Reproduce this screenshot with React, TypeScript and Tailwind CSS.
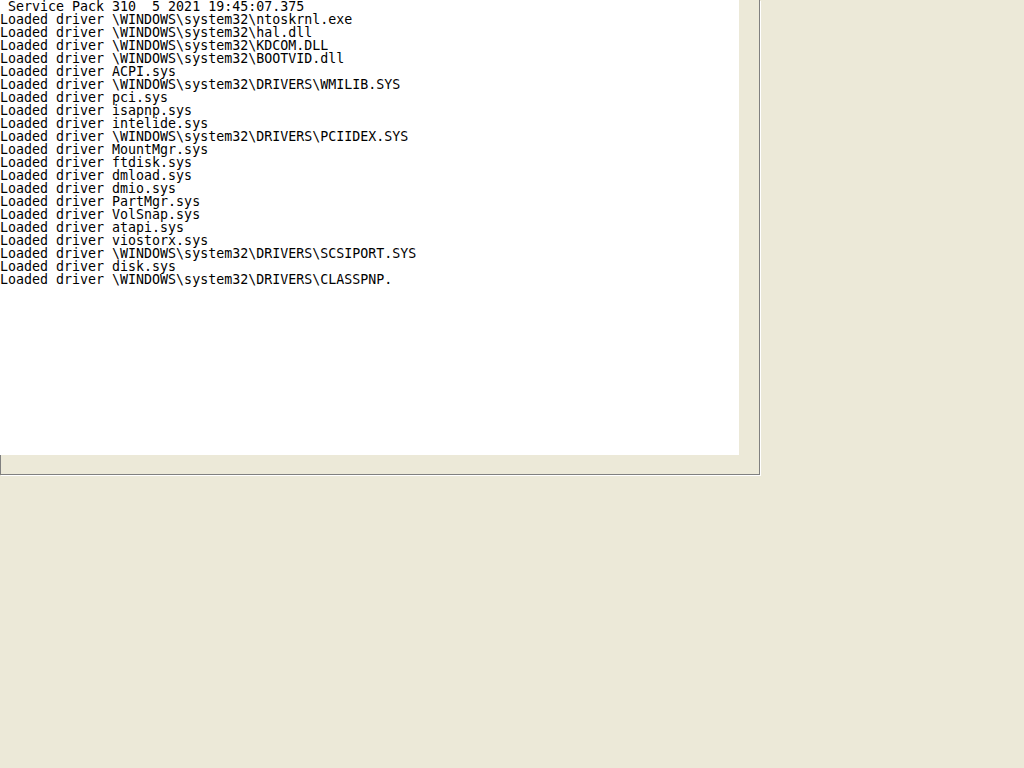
const lines = [
  ' Service Pack 310  5 2021 19:45:07.375',
  'Loaded driver \\WINDOWS\\system32\\ntoskrnl.exe',
  'Loaded driver \\WINDOWS\\system32\\hal.dll',
  'Loaded driver \\WINDOWS\\system32\\KDCOM.DLL',
  'Loaded driver \\WINDOWS\\system32\\BOOTVID.dll',
  'Loaded driver ACPI.sys',
  'Loaded driver \\WINDOWS\\system32\\DRIVERS\\WMILIB.SYS',
  'Loaded driver pci.sys',
  'Loaded driver isapnp.sys',
  'Loaded driver intelide.sys',
  'Loaded driver \\WINDOWS\\system32\\DRIVERS\\PCIIDEX.SYS',
  'Loaded driver MountMgr.sys',
  'Loaded driver ftdisk.sys',
  'Loaded driver dmload.sys',
  'Loaded driver dmio.sys',
  'Loaded driver PartMgr.sys',
  'Loaded driver VolSnap.sys',
  'Loaded driver atapi.sys',
  'Loaded driver viostorx.sys',
  'Loaded driver \\WINDOWS\\system32\\DRIVERS\\SCSIPORT.SYS',
  'Loaded driver disk.sys',
  'Loaded driver \\WINDOWS\\system32\\DRIVERS\\CLASSPNP.',
];

export default function App() {
  return (
    <div className="h-screen w-full bg-[#ECE9D8]">
      <div className="flex flex-col w-[760px] h-[475px] border-r border-b border-[#808080] shadow-[1px_1px_0_#ffffff]">
        <div className="w-[739px] h-[455px] bg-white overflow-hidden">
          <pre className="font-['DejaVu_Sans_Mono',monospace] text-[13.3px] leading-[13px] text-black whitespace-pre">
            {lines.join('\n')}
          </pre>
        </div>
        <div className="flex-1 border-l border-[#808080]" />
      </div>
    </div>
  );
}
